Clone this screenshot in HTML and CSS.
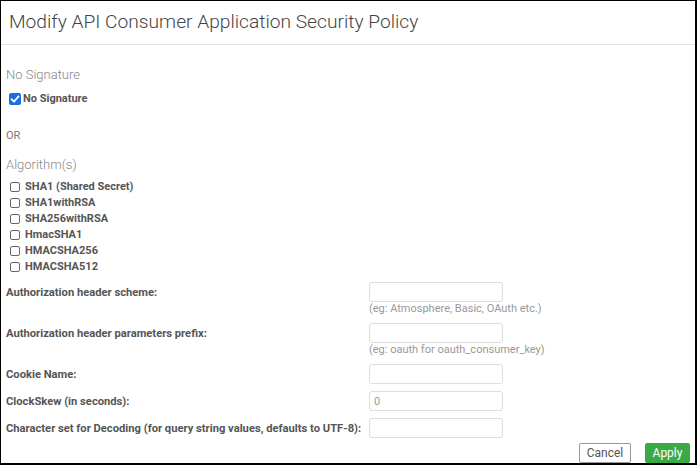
FILE: index.html
```html
<!DOCTYPE html>
<html>
<head>
<meta charset="utf-8">
<link rel="stylesheet" href="styles.css">
</head>
<body>
<div class="frame">
  <div class="header">
    <h1 class="title">Modify API Consumer Application Security Policy</h1>
  </div>
  <div class="content">
    <div class="section-title ns-title">No Signature</div>
    <label class="check check-main">
      <span class="box checked"><svg viewBox="0 0 12 12" width="12" height="12"><rect x="0" y="0" width="12" height="12" rx="2" fill="#1a6fe0"/><path d="M2.5 6.2 L5 8.6 L9.6 3.4" fill="none" stroke="#fff" stroke-width="1.8" stroke-linecap="round" stroke-linejoin="round"/></svg></span>
      <span>No Signature</span>
    </label>
    <div class="or">OR</div>
    <div class="section-title alg-title">Algorithm(s)</div>
    <ul class="alg-list">
      <li class="check"><span class="box"></span><span>SHA1 (Shared Secret)</span></li>
      <li class="check"><span class="box"></span><span>SHA1withRSA</span></li>
      <li class="check"><span class="box"></span><span>SHA256withRSA</span></li>
      <li class="check"><span class="box"></span><span>HmacSHA1</span></li>
      <li class="check"><span class="box"></span><span>HMACSHA256</span></li>
      <li class="check"><span class="box"></span><span>HMACSHA512</span></li>
    </ul>
    <div class="form">
      <div class="row">
        <div class="label">Authorization header scheme:</div>
        <div class="field"><div class="input"></div><div class="hint">(eg: Atmosphere, Basic, OAuth etc.)</div></div>
      </div>
      <div class="row">
        <div class="label">Authorization header parameters prefix:</div>
        <div class="field"><div class="input"></div><div class="hint">(eg: oauth for oauth_consumer_key)</div></div>
      </div>
      <div class="row">
        <div class="label">Cookie Name:</div>
        <div class="field"><div class="input"></div></div>
      </div>
      <div class="row">
        <div class="label">ClockSkew (in seconds):</div>
        <div class="field"><div class="input">0</div></div>
      </div>
      <div class="row">
        <div class="label">Character set for Decoding (for query string values, defaults to UTF-8):</div>
        <div class="field"><div class="input"></div></div>
      </div>
    </div>
    <div class="actions">
      <button class="btn btn-cancel">Cancel</button>
      <button class="btn btn-apply">Apply</button>
    </div>
  </div>
</div>
</body>
</html>
```
FILE: styles.css
```css
* { box-sizing: border-box; }
html, body { margin: 0; padding: 0; background: #fff; }
body { font-family: Roboto, "Liberation Sans", sans-serif; color: #555; }
.frame {
  width: 697px;
  height: 465px;
  border: 1px solid #000;
  border-right-width: 2px;
  border-bottom-width: 2px;
  overflow: hidden;
}
.header {
  height: 44px;
  border-bottom: 1px solid #e3e3e3;
  padding: 9px 0 0 8px;
}
.title {
  margin: 0;
  font-size: 19.2px;
  font-weight: 300;
  line-height: 24px;
  color: #444;
  white-space: nowrap;
}
.content { padding: 0 0 0 5px; }
.section-title {
  font-size: 13px;
  font-weight: 300;
  color: #888;
  line-height: 16px;
}
.ns-title { margin-top: 22px; }
.check {
  display: flex;
  align-items: center;
  font-size: 11px;
  font-weight: 700;
  color: #555;
  line-height: 16px;
  white-space: nowrap;
}
.check-main { margin-top: 8px; padding-left: 3px; gap: 2px; }
.box {
  width: 11px;
  height: 11px;
  border: 1px solid #666;
  border-radius: 2px;
  display: inline-block;
  flex: none;
}
.box.checked { border: none; width: 12px; height: 12px; }
.box svg { display: block; }
.or { font-size: 11px; color: #777; margin-top: 22px; line-height: 14px; }
.alg-title { margin-top: 14px; }
.alg-list { list-style: none; margin: 6px 0 0; padding: 0 0 0 4px; }
.alg-list .check { gap: 5px; height: 16px; }
.alg-list .box { width: 10px; height: 10px; border-color: #666; }
.form { margin-top: 7px; }
.row {
  display: grid;
  grid-template-columns: 363px 134px;
  align-items: start;
  margin-bottom: 7px;
}
.label {
  font-size: 11.2px;
  font-weight: 700;
  color: #555;
  padding-top: 4px;
  line-height: 14px;
  white-space: nowrap;
}
.input {
  height: 20px;
  border: 1px solid #ddd;
  border-radius: 3px;
  font-size: 11px;
  color: #999;
  padding: 3px 0 0 4px;
}
.hint {
  font-size: 11px;
  color: #999;
  line-height: 14px;
  white-space: nowrap;
}
.actions {
  display: flex;
  justify-content: flex-end;
  gap: 14px;
  padding-right: 5px;
  margin-top: -2px;
}
.btn {
  font-family: Roboto, "Liberation Sans", sans-serif;
  font-size: 12px;
  height: 20px;
  padding: 0;
  border-radius: 2px;
  cursor: pointer;
}
.btn-cancel { background: #fff; border: 1px solid #999; color: #555; width: 52px; }
.btn-apply { background: #3aaa48; border: 1px solid #3aaa48; color: #fff; width: 45px; }
```
